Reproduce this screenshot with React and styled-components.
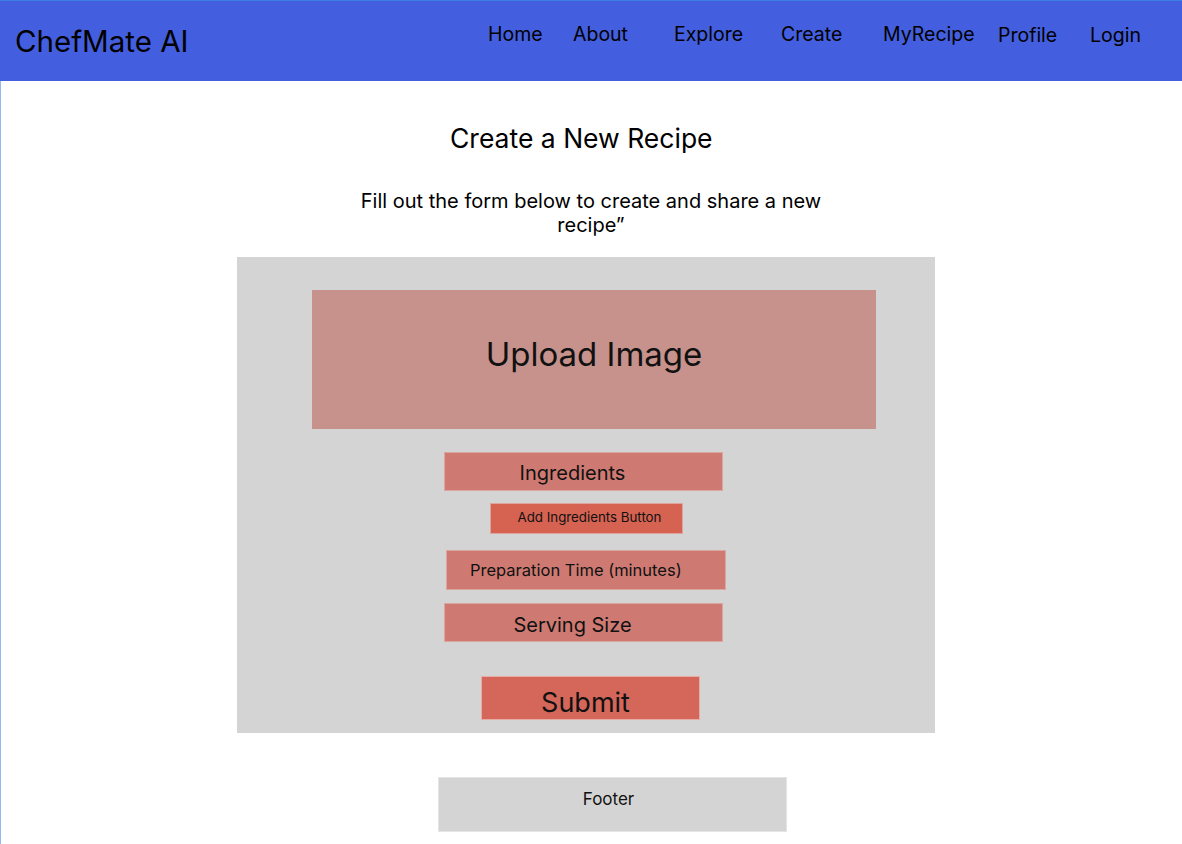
import React from 'react';
import styled, { createGlobalStyle } from 'styled-components';

const GlobalStyle = createGlobalStyle`
   body {
      margin: 0;
      background: #ffffff;
      font-family: Inter, "Noto Sans", sans-serif;
      color: #000000;
   }
`;

const Page = styled.div`
   min-height: 844px;
   border-left: 1px solid #93b8f5;
   box-sizing: border-box;
`;

const Header = styled.header`
   height: 81px;
   box-sizing: border-box;
   background: #435fdf;
   border-top: 1px solid #3a7fe0;
   display: flex;
   align-items: flex-start;
   margin-left: -1px;
`;

const Logo = styled.div`
   font-size: 29.5px;
   line-height: 34px;
   margin: 23px 0 0 15px;
   width: 473px;
`;

const Nav = styled.nav`
   display: flex;
   padding-top: 20px;
`;

const NavItem = styled.a`
   width: ${p => p.slot}px;
   font-size: 19.5px;
   line-height: 26px;
   margin-top: ${p => p.drop || 0}px;
   color: #000;
   text-decoration: none;
   cursor: pointer;
`;

const Main = styled.main`
   display: flex;
   flex-direction: column;
`;

const Title = styled.h1`
   margin: 41px 0 0 449px;
   font-size: 26.5px;
   line-height: 32px;
   font-weight: 400;
`;

const Subtitle = styled.p`
   margin: 35px 0 0 355px;
   width: 470px;
   font-size: 20px;
   line-height: 24px;
   text-align: center;
`;

const Panel = styled.form`
   margin: 20px 0 0 236px;
   width: 698px;
   height: 476px;
   box-sizing: border-box;
   background: #d4d4d4;
   padding-top: 33px;
   display: flex;
   flex-direction: column;
   align-items: flex-start;
`;

const Block = styled.div`
   box-sizing: border-box;
   width: ${p => p.w}px;
   height: ${p => p.h}px;
   margin: ${p => p.top}px 0 0 ${p => p.left}px;
   background: ${p => p.bg};
   border: 1px solid ${p => p.edge || 'transparent'};
   display: flex;
   align-items: center;
   justify-content: ${p => (p.start ? 'flex-start' : 'center')};
   padding: ${p => p.pad || '0'};
   font-family: inherit;
   font-size: ${p => p.size}px;
   color: #111;
   cursor: pointer;
`;

const Footer = styled.footer`
   margin: 44px 0 0 437px;
   width: 349px;
   height: 55px;
   background: #d4d4d4;
   border: 1px solid #e4e4e4;
   box-sizing: border-box;
   text-align: center;
   font-size: 17px;
   line-height: 20px;
   padding: 11px 8px 0 0;
   color: #111;
`;

const navLinks = [
   { label: 'Home', slot: 85 },
   { label: 'About', slot: 101 },
   { label: 'Explore', slot: 107 },
   { label: 'Create', slot: 102 },
   { label: 'MyRecipe', slot: 115 },
   { label: 'Profile', slot: 92, drop: 1 },
   { label: 'Login', slot: 60, drop: 1 },
];

export default function App() {
   return (
      <>
         <GlobalStyle />
         <Page>
            <Header>
               <Logo>ChefMate AI</Logo>
               <Nav>
                  {navLinks.map(l => (
                     <NavItem key={l.label} slot={l.slot} drop={l.drop}>{l.label}</NavItem>
                  ))}
               </Nav>
            </Header>
            <Main>
               <Title>Create a New Recipe</Title>
               <Subtitle>Fill out the form below to create and share a new recipe”</Subtitle>
               <Panel onSubmit={e => e.preventDefault()}>
                  <Block w={564} h={139} top={0} left={75} bg="#c7918c" size={33} pad="0 0 12px 0">
                     Upload Image
                  </Block>
                  <Block w={279} h={39} top={23} left={207} bg="#ce7a72" edge="#dba6a0" size={20} pad="2px 22px 0 0">
                     Ingredients
                  </Block>
                  <Block w={193} h={31} top={12} left={253} bg="#d66251" edge="#dea59c" size={13.3} pad="0 0 3px 6px">
                     Add Ingredients Button
                  </Block>
                  <Block w={280} h={40} top={16} left={209} bg="#ce7a72" edge="#dba6a0" size={16.5} start pad="0 0 0 23px">
                     Preparation Time (minutes)
                  </Block>
                  <Block w={279} h={39} top={13} left={207} bg="#ce7a72" edge="#dba6a0" size={20} pad="4px 22px 0 0">
                     Serving Size
                  </Block>
                  <Block as="button" type="submit" w={219} h={44} top={34} left={244} bg="#d4675a" edge="#e7ada4" size={27} pad="9px 10px 0 0">
                     Submit
                  </Block>
               </Panel>
               <Footer>Footer</Footer>
            </Main>
         </Page>
      </>
   );
}
